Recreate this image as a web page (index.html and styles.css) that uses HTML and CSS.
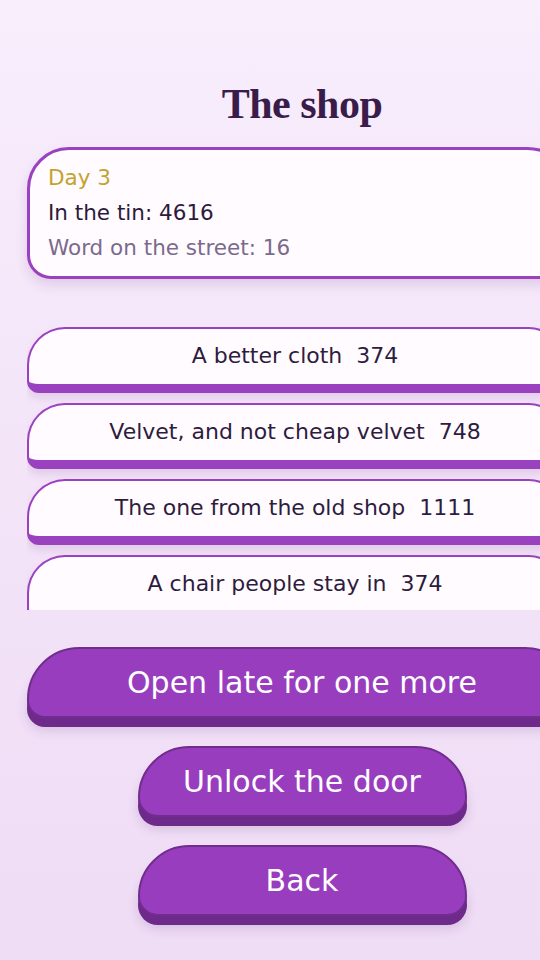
FILE: index.html
```html
<!DOCTYPE html>
<html lang="en">
<head>
<meta charset="utf-8">
<title>The shop</title>
<link rel="stylesheet" href="styles.css">
</head>
<body>
<main class="app">
  <h1 class="title">The shop</h1>
  <section class="status">
    <div class="status-day">Day 3</div>
    <div class="status-tin">In the tin: 4616</div>
    <div class="status-word">Word on the street: 16</div>
  </section>
  <div class="items">
    <div class="item">A better cloth&nbsp; 374</div>
    <div class="item">Velvet, and not cheap velvet&nbsp; 748</div>
    <div class="item">The one from the old shop&nbsp; 1111</div>
    <div class="item">A chair people stay in&nbsp; 374</div>
  </div>
  <div class="actions">
    <button class="btn btn-wide">Open late for one more</button>
    <button class="btn btn-small">Unlock the door</button>
    <button class="btn btn-small">Back</button>
  </div>
</main>
</body>
</html>
```

FILE: styles.css
```css
html, body {
  margin: 0;
  padding: 0;
  overflow: hidden;
  height: 100%;
}
body {
  background: linear-gradient(180deg, #f8eefc 0%, #f3e4f8 50%, #efdcf5 100%);
  font-family: "DejaVu Sans", "Noto Sans", sans-serif;
}
.app {
  width: 604px;
  box-sizing: border-box;
  padding: 79px 27px 0;
  display: flex;
  flex-direction: column;
}
.title {
  margin: 0;
  font-family: "Liberation Serif", "DejaVu Serif", serif;
  font-weight: bold;
  font-size: 42px;
  line-height: 50px;
  letter-spacing: -0.5px;
  color: #3a1c4b;
  text-align: center;
}
.status {
  margin-top: 18px;
  height: 132px;
  box-sizing: border-box;
  border: 3px solid #9a41bf;
  border-radius: 42px 50px 26px 24px;
  background: #fffbff;
  padding: 10px 18px 0;
  font-size: 21.5px;
  line-height: 35px;
  box-shadow: 0 6px 12px rgba(110, 50, 140, 0.16);
}
.status-day { color: #c3a42e; }
.status-tin { color: #2c1a3b; }
.status-word { color: #7b6a8d; }
.items {
  margin-top: 48px;
  height: 283px;
  overflow: hidden;
  padding-right: 14px;
  display: flex;
  flex-direction: column;
  gap: 10px;
}
.item {
  flex: none;
  height: 66px;
  box-sizing: border-box;
  border: 2px solid #9a41bf;
  border-bottom-width: 9px;
  border-radius: 38px 34px 12px 12px;
  background: #fffbff;
  color: #2e1c3e;
  font-size: 22px;
  line-height: 52px;
  padding-top: 1px;
  text-align: center;
  box-shadow: 0 5px 8px rgba(110, 50, 140, 0.14);
}
.actions {
  margin-top: 37px;
  display: flex;
  flex-direction: column;
  align-items: center;
  gap: 28px;
}
.btn {
  height: 71px;
  box-sizing: border-box;
  border: 2px solid #712d8d;
  background: #993dbf;
  color: #ffffff;
  font-family: "DejaVu Sans", "Noto Sans", sans-serif;
  font-size: 30px;
  line-height: 67px;
  padding: 0;
  text-align: center;
  box-shadow: 0 9px 0 #6d2a8b, 0 12px 12px rgba(110, 50, 140, 0.2);
}
.btn-wide {
  align-self: stretch;
  border-radius: 52px 52px 18px 18px;
}
.btn-small {
  width: 329px;
  border-radius: 52px 52px 20px 20px;
}
```
